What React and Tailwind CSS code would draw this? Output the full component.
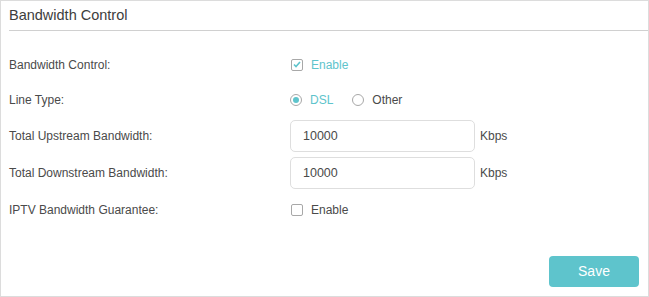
import React, { useState } from 'react';

const Row = ({ label, h, children }) => (
  <div className={`flex items-center ${h}`}>
    <div className="w-[281px] text-[12px] text-[#4a4a4a]">{label}</div>
    <div className="flex items-center">{children}</div>
  </div>
);

const Checkbox = ({ checked, label, teal, onChange }) => (
  <label className="flex items-center cursor-pointer" onClick={onChange}>
    <span className="ml-[1px] w-[12px] h-[12px] border border-[#a8a8a8] rounded-[2px] flex items-center justify-center bg-white">
      {checked && (
        <svg width="8" height="7" viewBox="0 0 8 7">
          <path d="M1 3.5 L3 5.5 L7 1" fill="none" stroke="#5ec4cc" strokeWidth="1.6" />
        </svg>
      )}
    </span>
    <span className={`ml-[8px] text-[12px] ${teal ? 'text-[#5ec4cc]' : 'text-[#4a4a4a]'}`}>{label}</span>
  </label>
);

const Radio = ({ checked, label, onChange }) => (
  <label className="flex items-center cursor-pointer mr-[19px]" onClick={onChange}>
    <span className="w-[12px] h-[12px] border border-[#a8a8a8] rounded-full flex items-center justify-center bg-white">
      {checked && <span className="w-[6px] h-[6px] rounded-full bg-[#5ec4cc]" />}
    </span>
    <span className={`ml-[8px] text-[12px] ${checked ? 'text-[#5ec4cc]' : 'text-[#4a4a4a]'}`}>{label}</span>
  </label>
);

const App = () => {
  const [enabled, setEnabled] = useState(true);
  const [lineType, setLineType] = useState('DSL');
  const [upstream, setUpstream] = useState('10000');
  const [downstream, setDownstream] = useState('10000');
  const [iptv, setIptv] = useState(false);

  return (
    <div className="w-[649px] h-[297px] border border-[#dcdcdc] bg-white flex flex-col font-['Liberation_Sans',Arial,sans-serif]">
      {/* Header */}
      <div className="pl-[8px]">
        <div className="h-[30px] flex items-center text-[14.5px] text-[#3d3d3d] border-b border-[#d0d0d0]">
          Bandwidth Control
        </div>
      </div>

      {/* Form */}
      <div className="pl-[8px] pt-[16px]">
        <Row label="Bandwidth Control:" h="h-[35px]">
          <Checkbox checked={enabled} teal={enabled} label="Enable" onChange={() => setEnabled(!enabled)} />
        </Row>
        <Row label="Line Type:" h="h-[35px]">
          <Radio checked={lineType === 'DSL'} label="DSL" onChange={() => setLineType('DSL')} />
          <Radio checked={lineType === 'Other'} label="Other" onChange={() => setLineType('Other')} />
        </Row>
        <Row label="Total Upstream Bandwidth:" h="h-[37px]">
          <input
            type="text"
            value={upstream}
            onChange={(e) => setUpstream(e.target.value)}
            className="w-[185px] h-[32px] border border-[#dedede] rounded-[5px] px-[12px] text-[12.5px] text-[#4a4a4a] outline-none"
          />
          <span className="ml-[5px] text-[12px] text-[#4a4a4a]">Kbps</span>
        </Row>
        <Row label="Total Downstream Bandwidth:" h="h-[37px]">
          <input
            type="text"
            value={downstream}
            onChange={(e) => setDownstream(e.target.value)}
            className="w-[185px] h-[32px] border border-[#dedede] rounded-[5px] px-[12px] text-[12.5px] text-[#4a4a4a] outline-none"
          />
          <span className="ml-[5px] text-[12px] text-[#4a4a4a]">Kbps</span>
        </Row>
        <Row label="IPTV Bandwidth Guarantee:" h="h-[37px]">
          <Checkbox checked={iptv} label="Enable" onChange={() => setIptv(!iptv)} />
        </Row>
      </div>

      {/* Footer */}
      <div className="flex justify-end mt-auto pr-[9px] pb-[9px]">
        <button className="w-[90px] h-[31px] rounded-[4px] bg-[#5ec4cc] text-white text-[14px]">Save</button>
      </div>
    </div>
  );
};

export default App;
